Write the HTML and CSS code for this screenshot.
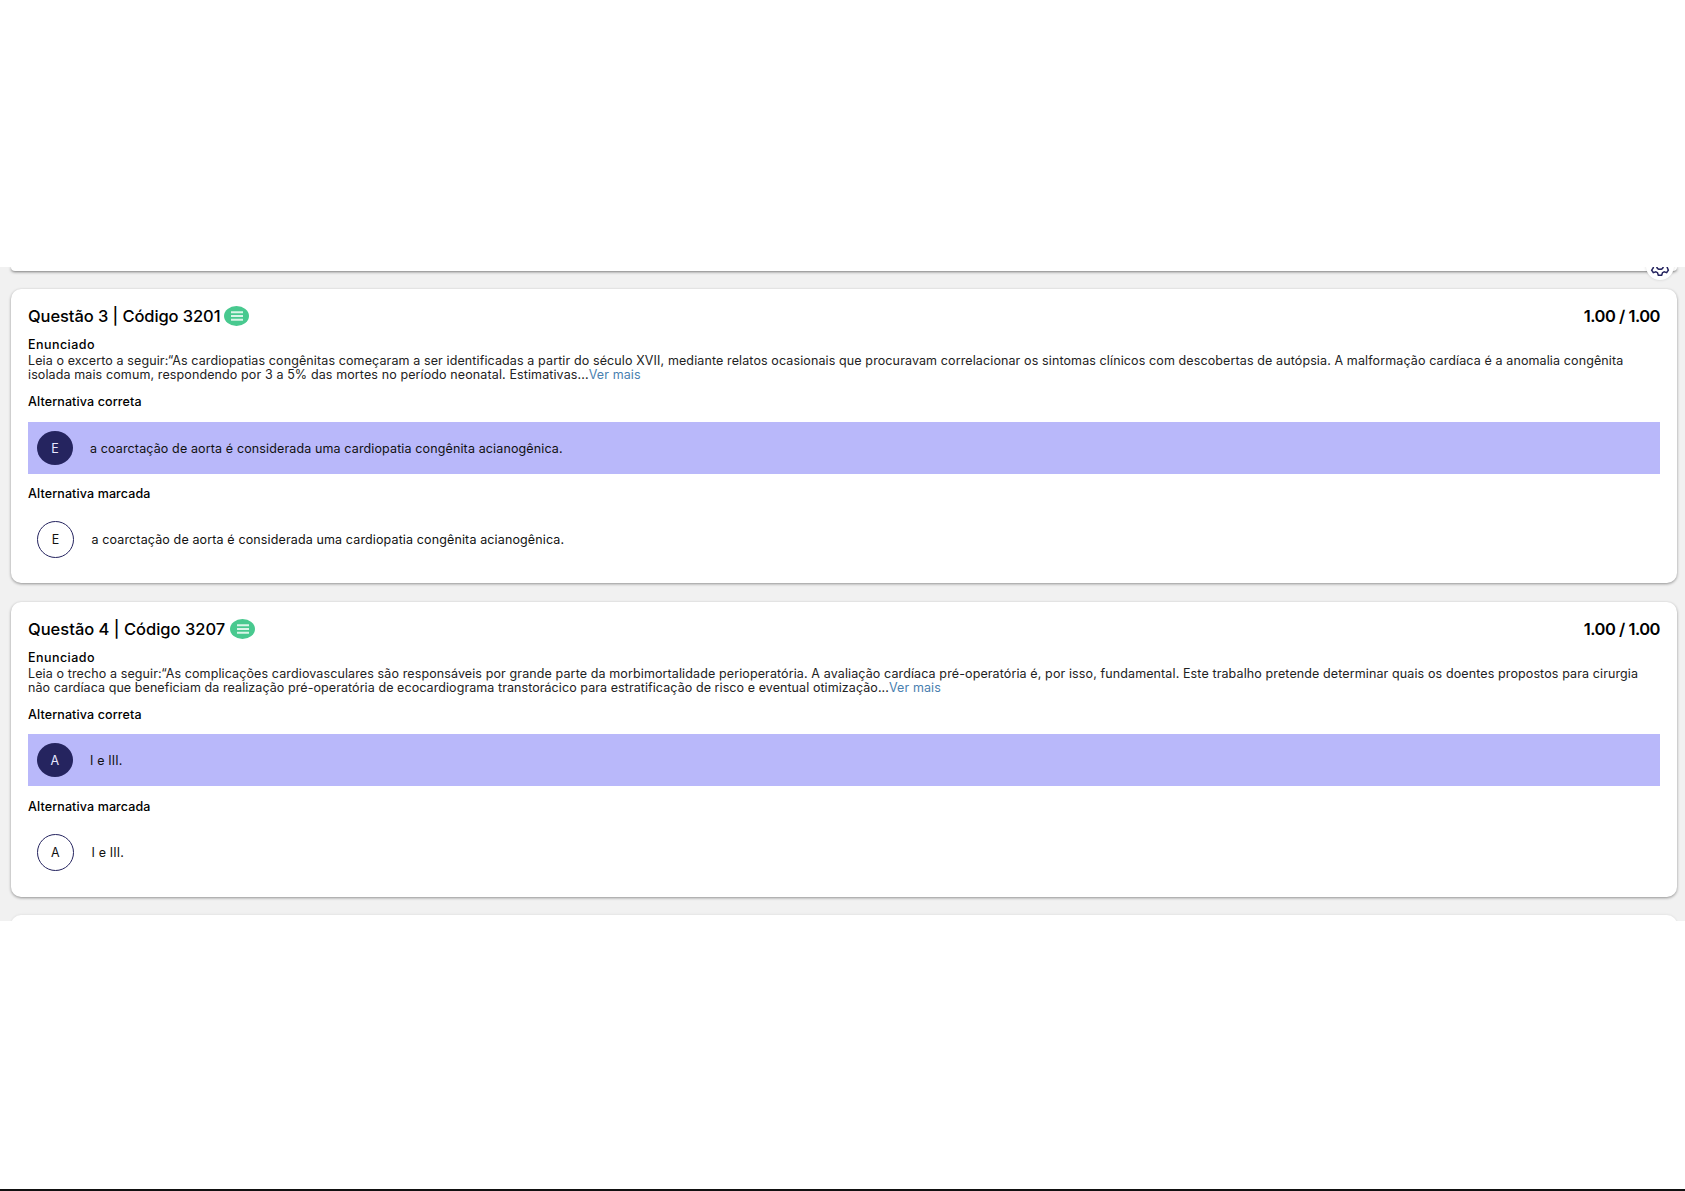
FILE: index.html
```html
<!DOCTYPE html>
<html lang="pt-BR">
<head>
<meta charset="utf-8">
<title>Questões</title>
<link rel="stylesheet" href="styles.css">
</head>
<body>
<div class="blank-top"></div>
<main class="scroller">
  <div class="card-stub"></div>
  <button class="gear" aria-label="Configurações">
    <svg viewBox="0 0 24 24" width="20" height="20"><path class="gear-path" d="M12 8a4 4 0 1 0 0 8 4 4 0 0 0 0-8zm8 4 2-2-2-3-3 1-2-2-1-3h-4L9 4 7 5 4 4 2 7l2 3v4l-2 3 2 3 3-1 2 1 1 3h4l1-3 2-1 3 1 2-3z"/></svg>
  </button>

  <article class="card card-short">
    <header class="card-head">
      <h2 class="title">Questão 3 | Código 3201</h2>
      <span class="note-badge"><svg viewBox="0 0 16 12" width="16" height="12"><path class="note-lines" d="M2 2.2h12M2 6h12M2 9.8h12"/></svg></span>
      <span class="score">1.00 / 1.00</span>
    </header>
    <h3 class="label label-first">Enunciado</h3>
    <p class="statement">Leia o excerto a seguir:“As cardiopatias congênitas começaram a ser identificadas a partir do século XVII, mediante relatos ocasionais que procuravam correlacionar os sintomas clínicos com descobertas de autópsia. A malformação cardíaca é a anomalia congênita<br>isolada mais comum, respondendo por 3 a 5% das mortes no período neonatal. Estimativas...<a class="more">Ver mais</a></p>
    <h3 class="label label-alt">Alternativa correta</h3>
    <div class="option option-correct"><span class="letter">E</span><span class="option-text">a coarctação de aorta é considerada uma cardiopatia congênita acianogênica.</span></div>
    <h3 class="label label-marked">Alternativa marcada</h3>
    <div class="option option-marked"><span class="letter">E</span><span class="option-text">a coarctação de aorta é considerada uma cardiopatia congênita acianogênica.</span></div>
  </article>

  <article class="card card-wide">
    <header class="card-head">
      <h2 class="title">Questão 4 | Código 3207</h2>
      <span class="note-badge"><svg viewBox="0 0 16 12" width="16" height="12"><path class="note-lines" d="M2 2.2h12M2 6h12M2 9.8h12"/></svg></span>
      <span class="score">1.00 / 1.00</span>
    </header>
    <h3 class="label label-first">Enunciado</h3>
    <p class="statement">Leia o trecho a seguir:“As complicações cardiovasculares são responsáveis por grande parte da morbimortalidade perioperatória. A avaliação cardíaca pré-operatória é, por isso, fundamental. Este trabalho pretende determinar quais os doentes propostos para cirurgia<br><span class="tight">não cardíaca que beneficiam da realização pré-operatória de ecocardiograma transtorácico para estratificação de risco e eventual otimização...</span><a class="more">Ver mais</a></p>
    <h3 class="label label-alt">Alternativa correta</h3>
    <div class="option option-correct"><span class="letter">A</span><span class="option-text">I e III.</span></div>
    <h3 class="label label-marked">Alternativa marcada</h3>
    <div class="option option-marked"><span class="letter">A</span><span class="option-text">I e III.</span></div>
  </article>

  <div class="card card-next"></div>
</main>
<div class="blank-bottom"></div>
</body>
</html>
```
FILE: styles.css
```css
* { box-sizing: border-box; }
html, body { margin: 0; padding: 0; background: #fff; }
body {
  width: 1685px;
  height: 1191px;
  overflow: hidden;
  font-family: Inter, "Open Sans", sans-serif;
  color: #111;
  display: flex;
  flex-direction: column;
}
.blank-top { height: 267px; flex: none; background: #fff; }
.scroller {
  position: relative;
  height: 654px;
  flex: none;
  overflow: hidden;
  background: #f1f1f1;
  padding: 0 8px 0 11px;
}
.card-stub {
  height: 4px;
  margin-bottom: 18px;
  background: #fff;
  border-radius: 0 0 10px 10px;
  box-shadow: 0 1px 3px rgba(0,0,0,.5);
}
.gear {
  position: absolute;
  top: -15px;
  left: 1646px;
  width: 28px;
  height: 28px;
  padding: 0;
  border: 0;
  border-radius: 50%;
  background: #fff;
  display: flex;
  align-items: center;
  justify-content: center;
  box-shadow: 0 0 3px rgba(0,0,0,.15);
}
.gear-path { fill: none; stroke: #25245f; stroke-width: 1.8; }
.card {
  height: 295px;
  margin-bottom: 18px;
  padding: 17px 17px 0;
  background: #fff;
  border-radius: 10px;
  box-shadow: 0 1px 3px rgba(0,0,0,.4);
}
.card-short { height: 294px; margin-bottom: 19px; }
.card-next { box-shadow: 0 0 3px rgba(0,0,0,.1); }
.card-head { display: flex; align-items: center; height: 20px; }
.title { margin: 0; font-size: 16.5px; font-weight: 500; letter-spacing: -.09px; color: #000; }
.note-badge {
  margin-left: 4px;
  width: 25px;
  height: 20px;
  border-radius: 50%;
  background: #48c98f;
  display: flex;
  align-items: center;
  justify-content: center;
}
.card-wide .title { letter-spacing: 0; }
.card-wide .note-badge { margin-left: 5px; }
.note-lines { fill: none; stroke: #d9f5e8; stroke-width: 2; }
.score { margin-left: auto; font-size: 16.5px; font-weight: 600; letter-spacing: -.5px; color: #000; }
.label { margin: 0; font-size: 12.5px; line-height: 15px; font-weight: 500; letter-spacing: .12px; color: #000; }
.label-first { margin-top: 11px; letter-spacing: .45px; }
.statement { margin: 1.5px 0 0; font-size: 12.5px; line-height: 14.5px; font-weight: 400; letter-spacing: .115px; color: #222; white-space: nowrap; }
.tight { letter-spacing: .075px; }
.more { color: #4a7fb0; }
.label-alt { margin-top: 11px; }
.label-marked { margin-top: 13px; }
.option { display: flex; align-items: center; height: 52px; font-size: 12.5px; letter-spacing: .13px; color: #111; }
.option-correct { margin-top: 12.5px; background: #b9b8fa; padding-left: 9px; }
.card-short .option-correct { margin-top: 13.5px; }
.card-short .label-marked { margin-top: 12px; }
.option-correct .letter { width: 36px; height: 34px; background: #25245f; color: #e8e8ff; }
.option-correct .option-text { margin-left: 17px; }
.option-marked { margin-top: 12px; padding-left: 9px; }
.option-marked .letter { width: 37px; height: 37px; border: 1px solid #25245f; }
.option-marked .option-text { margin-left: 17.5px; }
.letter { flex: none; display: flex; align-items: center; justify-content: center; border-radius: 50%; font-size: 12.5px; }
.blank-bottom { flex: 1; background: #fff; border-bottom: 2px solid #111; }
```
